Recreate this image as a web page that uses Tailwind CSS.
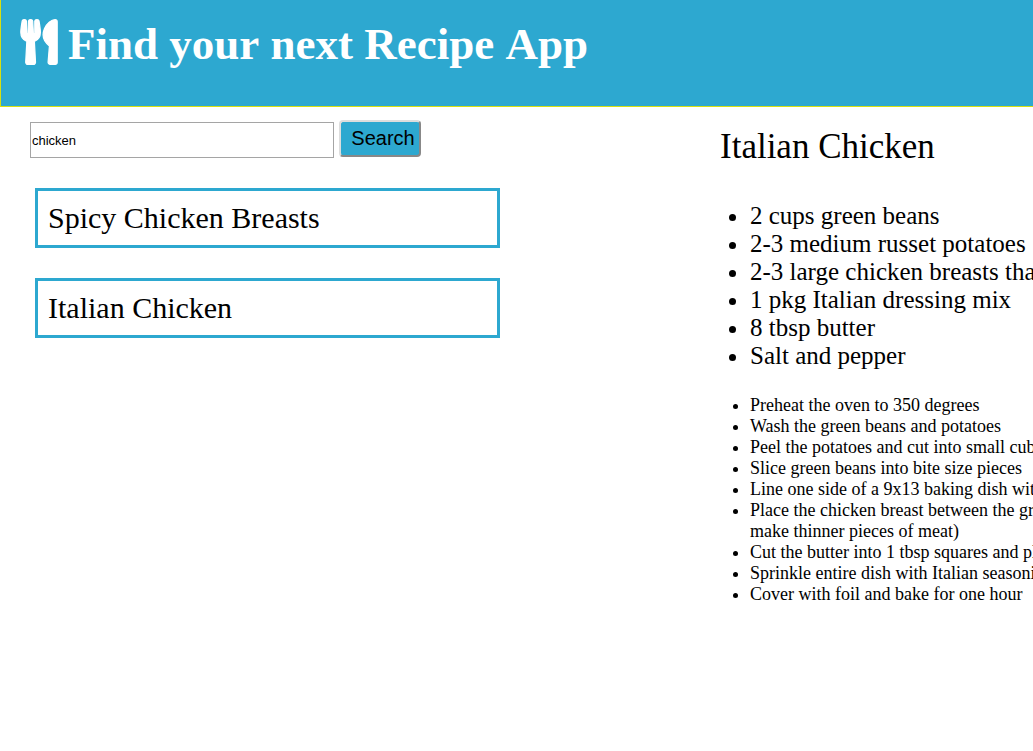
<!DOCTYPE html>
<html lang="en">
<head>
<meta charset="utf-8">
<meta name="viewport" content="width=device-width, initial-scale=1">
<title>Find your next Recipe App</title>
<script src="https://cdn.jsdelivr.net/npm/@tailwindcss/browser@4"></script>
</head>
<body class="min-h-screen overflow-x-hidden bg-white font-['Liberation_Serif',serif] text-black">
  <header class="flex h-[107px] items-start gap-2.5 border-b border-l border-[#d7e010] bg-[#2da8d0] pt-[18px] pl-[19px] text-white">
    <svg class="mt-px h-[46px] w-[38px] shrink-0" viewBox="-8 -7 432 526" fill="currentColor" stroke="currentColor" stroke-width="14" aria-hidden="true">
      <path d="M207.900 15.200c.8 4.700 16.100 94.500 16.100 128.800 0 52.300-27.800 89.600-68.900 104.600L168 486.700c.7 13.700-10.200 25.300-24 25.300H80c-13.700 0-24.700-11.500-24-25.300l12.900-238.100C27.700 233.600 0 196.200 0 144 0 109.600 15.300 19.900 16.100 15.200 19.300-5.100 61.400-5.400 64 16.300v141.200c1.300 3.400 15.100 3.200 16 0 1.400-25.300 7.900-139.200 8-141.800 3.300-20.800 44.700-20.800 47.900 0 .2 2.700 6.600 116.500 8 141.800.9 3.200 14.800 3.400 16 0V16.300c2.600-21.600 44.800-21.400 48-1.100zm119.200 285.700l-15 185.100c-1.200 14 9.900 26 23.900 26h56c13.300 0 24-10.700 24-24V24c0-13.200-10.700-24-24-24-82.500 0-221.400 178.500-64.900 300.900z"/>
    </svg>
    <h1 class="text-[45px]/[52px] font-bold whitespace-nowrap [font-kerning:none]">Find your next Recipe App</h1>
  </header>
  <main class="flex items-start">
    <div class="w-[720px] shrink-0 pt-[13px] pl-[30px]">
      <form class="flex items-start gap-[5px]" onsubmit="return false">
        <input type="text" aria-label="Search recipes" value="chicken" class="mt-0.5 h-9 w-[304px] border border-[#a5a5a5] px-px font-['Liberation_Sans',sans-serif] text-[13px]">
        <button type="submit" class="h-[37px] w-[82px] rounded border-2 border-t-[#dddddd] border-r-[#888888] border-b-[#888888] border-l-[#dddddd] bg-[#2da8d0] pb-0.5 pl-1.5 font-['Liberation_Sans',sans-serif] text-xl">Search</button>
      </form>
      <ul class="mt-[30px] ml-[5px] flex w-[465px] flex-col gap-[30px] text-3xl/[34px]">
        <li class="border-[3px] border-[#2da8d0] p-2.5">Spicy Chicken Breasts</li>
        <li class="border-[3px] border-[#2da8d0] p-2.5">Italian Chicken</li>
      </ul>
    </div>
    <article class="pt-5 whitespace-nowrap">
      <h2 class="text-[35px]/10">Italian Chicken</h2>
      <ul class="mt-[35px] list-disc pl-[30px] text-[25px]/7">
        <li>2 cups green beans</li>
        <li>2-3 medium russet potatoes</li>
        <li>2-3 large chicken breasts that</li>
        <li>1 pkg Italian dressing mix</li>
        <li>8 tbsp butter</li>
        <li>Salt and pepper</li>
      </ul>
      <ul class="mt-[25px] list-disc pl-[30px] text-lg/[21px]">
        <li>Preheat the oven to 350 degrees</li>
        <li>Wash the green beans and potatoes</li>
        <li>Peel the potatoes and cut into small cubes</li>
        <li>Slice green beans into bite size pieces</li>
        <li>Line one side of a 9x13 baking dish with</li>
        <li>Place the chicken breast between the green<br>make thinner pieces of meat)</li>
        <li>Cut the butter into 1 tbsp squares and place</li>
        <li>Sprinkle entire dish with Italian seasoning</li>
        <li>Cover with foil and bake for one hour</li>
      </ul>
    </article>
  </main>
</body>
</html>
